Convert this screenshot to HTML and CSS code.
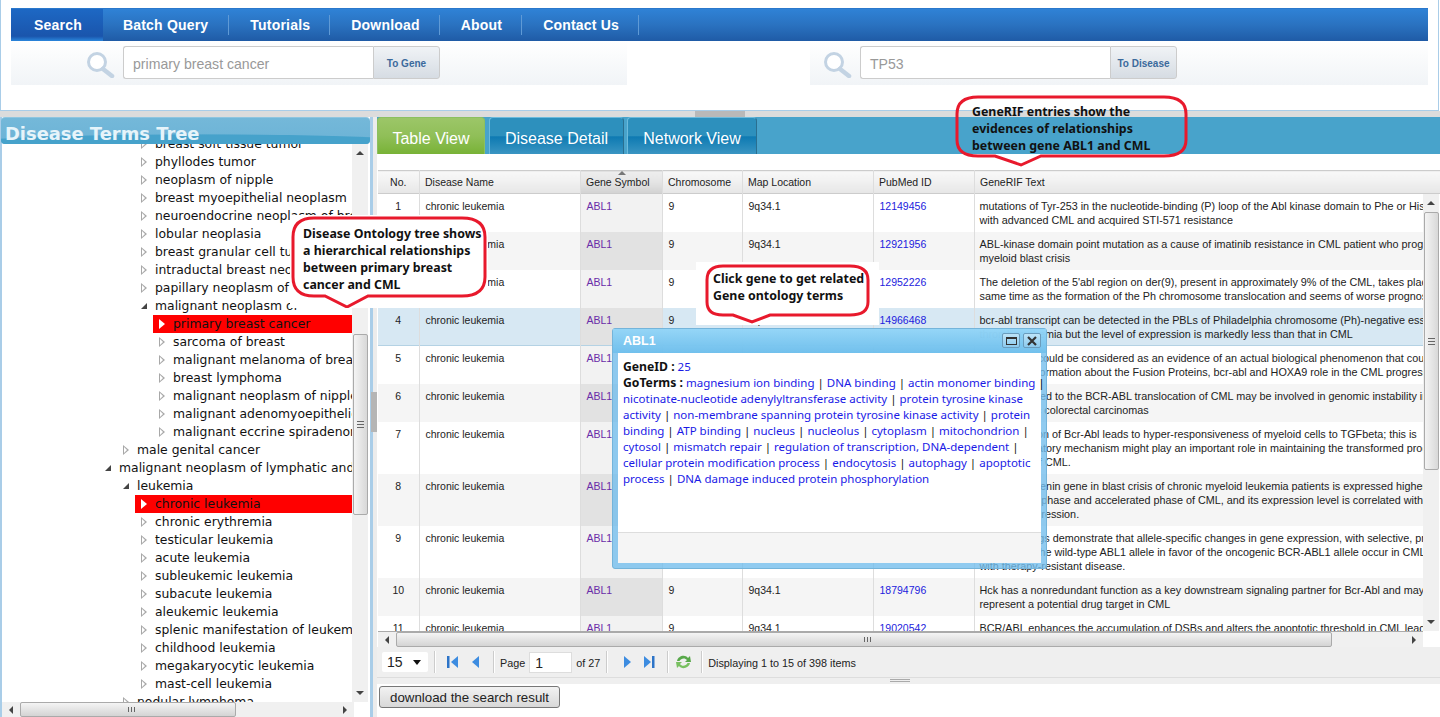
FILE: index.html
```html
<!DOCTYPE html>
<html>
<head>
  <title>Disease Terms</title>
  <link rel="stylesheet" href="styles.css">
</head>
<body>
  <div class="top">
    <ul class="nav">
      <li class="nav-item active">Search</li>
      <li class="nav-item">Batch Query</li>
      <li class="nav-item">Tutorials</li>
      <li class="nav-item">Download</li>
      <li class="nav-item">About</li>
      <li class="nav-item">Contact Us</li>
    </ul>
    <div class="search-row">
      <div class="search-block left-block">
        <svg class="lens" width="32" height="26" viewBox="0 0 32 26"><circle cx="12" cy="10" r="8.5" fill="#fff" stroke="#c3d3e3" stroke-width="3"/><path d="M18 17 L27 24" stroke="#c3d3e3" stroke-width="4.5" stroke-linecap="round"/></svg>
        <div class="search-input">primary breast cancer</div>
        <div class="search-btn">To Gene</div>
      </div>
      <div class="search-block right-block">
        <svg class="lens" width="32" height="26" viewBox="0 0 32 26"><circle cx="12" cy="10" r="8.5" fill="#fff" stroke="#c3d3e3" stroke-width="3"/><path d="M18 17 L27 24" stroke="#c3d3e3" stroke-width="4.5" stroke-linecap="round"/></svg>
        <div class="search-input">TP53</div>
        <div class="search-btn">To Disease</div>
      </div>
    </div>
  </div>

  <div class="split"><div class="split-handle"></div></div>

  <div class="main">
    <div class="tree-panel">
      <div class="tree-title">Disease Terms Tree</div>
      <div class="tree-wrap">
        <div class="tree-scroll">
          <div class="tree-list">
            <div class="tree-row l2"><i class="arrow"></i><span>breast soft tissue tumor</span></div>
            <div class="tree-row l2"><i class="arrow"></i><span>phyllodes tumor</span></div>
            <div class="tree-row l2"><i class="arrow"></i><span>neoplasm of nipple</span></div>
            <div class="tree-row l2"><i class="arrow"></i><span>breast myoepithelial neoplasm</span></div>
            <div class="tree-row l2"><i class="arrow"></i><span>neuroendocrine neoplasm of breast</span></div>
            <div class="tree-row l2"><i class="arrow"></i><span>lobular neoplasia</span></div>
            <div class="tree-row l2"><i class="arrow"></i><span>breast granular cell tumor</span></div>
            <div class="tree-row l2"><i class="arrow"></i><span>intraductal breast neoplasm</span></div>
            <div class="tree-row l2"><i class="arrow"></i><span>papillary neoplasm of breast</span></div>
            <div class="tree-row l2"><i class="arrow open"></i><span>malignant neoplasm of</span></div>
            <div class="tree-row l3 hit"><i class="arrow"></i><span>primary breast cancer</span></div>
            <div class="tree-row l3"><i class="arrow"></i><span>sarcoma of breast</span></div>
            <div class="tree-row l3"><i class="arrow"></i><span>malignant melanoma of breast</span></div>
            <div class="tree-row l3"><i class="arrow"></i><span>breast lymphoma</span></div>
            <div class="tree-row l3"><i class="arrow"></i><span>malignant neoplasm of nipple</span></div>
            <div class="tree-row l3"><i class="arrow"></i><span>malignant adenomyoepithelioma</span></div>
            <div class="tree-row l3"><i class="arrow"></i><span>malignant eccrine spiradenoma</span></div>
            <div class="tree-row l1"><i class="arrow"></i><span>male genital cancer</span></div>
            <div class="tree-row l0"><i class="arrow open"></i><span>malignant neoplasm of lymphatic and hematopoietic tissue</span></div>
            <div class="tree-row l1"><i class="arrow open"></i><span>leukemia</span></div>
            <div class="tree-row l2 hit"><i class="arrow"></i><span>chronic leukemia</span></div>
            <div class="tree-row l2"><i class="arrow"></i><span>chronic erythremia</span></div>
            <div class="tree-row l2"><i class="arrow"></i><span>testicular leukemia</span></div>
            <div class="tree-row l2"><i class="arrow"></i><span>acute leukemia</span></div>
            <div class="tree-row l2"><i class="arrow"></i><span>subleukemic leukemia</span></div>
            <div class="tree-row l2"><i class="arrow"></i><span>subacute leukemia</span></div>
            <div class="tree-row l2"><i class="arrow"></i><span>aleukemic leukemia</span></div>
            <div class="tree-row l2"><i class="arrow"></i><span>splenic manifestation of leukemia</span></div>
            <div class="tree-row l2"><i class="arrow"></i><span>childhood leukemia</span></div>
            <div class="tree-row l2"><i class="arrow"></i><span>megakaryocytic leukemia</span></div>
            <div class="tree-row l2"><i class="arrow"></i><span>mast-cell leukemia</span></div>
            <div class="tree-row l1"><i class="arrow"></i><span>nodular lymphoma</span></div>
          </div>
        </div>
        <div class="vbar tree-vbar">
          <i class="sb-up"></i>
          <div class="vtrack"><div class="vthumb"><i class="grip"></i></div></div>
          <i class="sb-down"></i>
        </div>
      </div>
      <div class="hbar tree-hbar">
        <i class="sb-left"></i>
        <div class="htrack"><div class="hthumb"></div></div>
        <i class="sb-right"></i>
      </div>
    </div>

    <div class="divider"><div class="divider-handle"></div></div>

    <div class="content">
      <div class="tabs">
        <div class="tab current">Table View</div>
        <div class="tab">Disease Detail</div>
        <div class="tab">Network View</div>
      </div>
      <div class="grid">
        <table class="grid-head">
          <colgroup><col class="c-no"><col class="c-name"><col class="c-gene"><col class="c-chr"><col class="c-map"><col class="c-pub"><col class="c-rif"></colgroup>
          <tr>
            <th class="center">No.</th>
            <th>Disease Name</th>
            <th class="sorted"><b class="sort-mark"></b>Gene Symbol</th>
            <th>Chromosome</th>
            <th>Map Location</th>
            <th>PubMed ID</th>
            <th>GeneRIF Text</th>
          </tr>
        </table>
        <div class="grid-mid">
          <div class="grid-rows">
            <table class="grid-body">
              <colgroup><col class="c-no"><col class="c-name"><col class="c-gene"><col class="c-chr"><col class="c-map"><col class="c-pub"><col class="c-rif"></colgroup>
              <tr><td class="center">1</td><td>chronic leukemia</td><td class="gene"><a>ABL1</a></td><td>9</td><td>9q34.1</td><td class="pub">12149456</td><td class="rif">mutations of Tyr-253 in the nucleotide-binding (P) loop of the Abl kinase domain to Phe or His<br>with advanced CML and acquired STI-571 resistance</td></tr>
              <tr><td class="center">2</td><td>chronic leukemia</td><td class="gene"><a>ABL1</a></td><td>9</td><td>9q34.1</td><td class="pub">12921956</td><td class="rif">ABL-kinase domain point mutation as a cause of imatinib resistance in CML patient who progressed to<br>myeloid blast crisis</td></tr>
              <tr><td class="center">3</td><td>chronic leukemia</td><td class="gene"><a>ABL1</a></td><td>9</td><td>9q34.1</td><td class="pub">12952226</td><td class="rif">The deletion of the 5'abl region on der(9), present in approximately 9% of the CML, takes place at the<br>same time as the formation of the Ph chromosome translocation and seems of worse prognosis</td></tr>
              <tr class="selected"><td class="center">4</td><td>chronic leukemia</td><td class="gene"><a>ABL1</a></td><td>9</td><td>9q34.1</td><td class="pub">14966468</td><td class="rif">bcr-abl transcript can be detected in the PBLs of Philadelphia chromosome (Ph)-negative essential<br>thrombocythemia but the level of expression is markedly less than that in CML</td></tr>
              <tr><td class="center">5</td><td>chronic leukemia</td><td class="gene"><a>ABL1</a></td><td>9</td><td>9q34.1</td><td class="pub">15107829</td><td class="rif">This finding could be considered as an evidence of an actual biological phenomenon that could<br>and more information about the Fusion Proteins, bcr-abl and HOXA9 role in the CML progression</td></tr>
              <tr><td class="center">6</td><td>chronic leukemia</td><td class="gene"><a>ABL1</a></td><td>9</td><td>9q34.1</td><td class="pub">15149347</td><td class="rif">Mutation linked to the BCR-ABL translocation of CML may be involved in genomic instability in<br>and sporadic colorectal carcinomas</td></tr>
              <tr><td class="center">7</td><td>chronic leukemia</td><td class="gene"><a>ABL1</a></td><td>9</td><td>9q34.1</td><td class="pub">15280218</td><td class="rif">Co-expression of Bcr-Abl leads to hyper-responsiveness of myeloid cells to TGFbeta; this is<br>its compensatory mechanism might play an important role in maintaining the transformed progenitors<br>phenotype of CML.</td></tr>
              <tr><td class="center">8</td><td>chronic leukemia</td><td class="gene"><a>ABL1</a></td><td>9</td><td>9q34.1</td><td class="pub">16007223</td><td class="rif">The beta-catenin gene in blast crisis of chronic myeloid leukemia patients is expressed higher<br>than chronic phase and accelerated phase of CML, and its expression level is correlated with the<br>disease progression.</td></tr>
              <tr><td class="center">9</td><td>chronic leukemia</td><td class="gene"><a>ABL1</a></td><td>9</td><td>9q34.1</td><td class="pub">17456803</td><td class="rif">These findings demonstrate that allele-specific changes in gene expression, with selective, preferential<br>silencing of the wild-type ABL1 allele in favor of the oncogenic BCR-ABL1 allele occur in CML<br>with therapy-resistant disease.</td></tr>
              <tr><td class="center">10</td><td>chronic leukemia</td><td class="gene"><a>ABL1</a></td><td>9</td><td>9q34.1</td><td class="pub">18794796</td><td class="rif">Hck has a nonredundant function as a key downstream signaling partner for Bcr-Abl and may<br>represent a potential drug target in CML</td></tr>
              <tr><td class="center">11</td><td>chronic leukemia</td><td class="gene"><a>ABL1</a></td><td>9</td><td>9q34.1</td><td class="pub">19020542</td><td class="rif">BCR/ABL enhances the accumulation of DSBs and alters the apoptotic threshold in CML leading to<br>genomic instability</td></tr>
            </table>
          </div>
          <div class="vbar grid-vbar">
            <i class="sb-up"></i>
            <div class="vtrack"><div class="vthumb"><i class="grip"></i></div></div>
            <i class="sb-down"></i>
          </div>
        </div>
        <div class="hbar grid-hbar">
          <i class="sb-left"></i>
          <div class="htrack"><div class="hthumb"></div></div>
          <i class="sb-right"></i>
        </div>
      </div>

      <div class="pager">
        <div class="page-size">15<i class="caret"></i></div>
        <i class="sep"></i>
        <svg class="pg-icon" width="12" height="14" viewBox="0 0 12 14"><rect x="0" y="1" width="2.5" height="12" fill="#2d74c8"/><path d="M11 1 V13 L4 7 Z" fill="#3d8ce0"/></svg>
        <svg class="pg-icon" width="8" height="14" viewBox="0 0 8 14"><path d="M8 1 V13 L1 7 Z" fill="#3d8ce0"/></svg>
        <i class="sep wide"></i>
        <span class="pg-text">Page</span>
        <div class="page-no">1</div>
        <span class="pg-text">of 27</span>
        <i class="sep"></i>
        <svg class="pg-icon next" width="8" height="14" viewBox="0 0 8 14"><path d="M0 1 V13 L7 7 Z" fill="#3d8ce0"/></svg>
        <svg class="pg-icon last" width="12" height="14" viewBox="0 0 12 14"><path d="M1 1 V13 L8 7 Z" fill="#3d8ce0"/><rect x="9" y="1" width="2.5" height="12" fill="#2d74c8"/></svg>
        <i class="sep"></i>
        <svg class="pg-icon refresh" width="17" height="16" viewBox="0 0 17 16"><path d="M2 7 C3 2 10 0 13 4 L15 2 L16 8 L10 8 L12 6 C10 3.500 6 4 4.500 7 Z" fill="#58a84a"/><path d="M15 9 C14 14 7 16 4 12 L2 14 L1 8 L7 8 L5 10 C7 13 11 12 12.500 9 Z" fill="#78c060"/></svg>
        <i class="sep"></i>
        <span class="pg-text">Displaying 1 to 15 of 398 items</span>
      </div>
      <div class="grid-foot"><i class="foot-handle"></i></div>
      <button class="download" type="button">download the search result</button>
    </div>
  </div>

  <!-- annotations drawn over the screenshot -->
  <div class="callout note-rif">
    <svg width="236" height="75" viewBox="0 0 236 75"><path d="M24 3 H210 Q232 3 232 20 V46 Q232 62 210 62 H87 L67 71 L41 62 H24 Q3 62 3 46 V20 Q3 3 24 3 Z" fill="none" stroke="#e8192c" stroke-width="3"/></svg>
    <p>GeneRIF entries show the<br>evidences of relationships<br>between gene ABL1 and CML</p>
  </div>
  <div class="callout note-tree">
    <svg width="198" height="93" viewBox="0 0 198 93"><path d="M24 3 H172 Q195 3 195 22 V62 Q195 81 172 81 H78 L57 92 L35 81 H24 Q3 81 3 62 V22 Q3 3 24 3 Z" fill="#fff" stroke="#e8192c" stroke-width="3"/></svg>
    <p>Disease Ontology tree shows<br>a hierarchical relationships<br>between primary breast<br>cancer and CML</p>
  </div>
  <div class="callout note-gene">
    <svg width="183" height="63" viewBox="0 0 183 63"><path d="M27 4 H154 Q172 4 172 18 V40 Q172 53 154 53 H74 L56 60 L37 53 H27 Q11 53 11 40 V18 Q11 4 27 4 Z" fill="#fff" stroke="#e8192c" stroke-width="3"/></svg>
    <p>Click gene to get related<br>Gene ontology terms</p>
  </div>

  <div class="window">
    <div class="win-head">
      <span class="win-title">ABL1</span>
      <div class="win-tools">
        <span class="win-tool"><i class="win-max"></i></span>
        <span class="win-tool"><svg width="10" height="10" viewBox="0 0 10 10"><path d="M1 1 L9 9 M9 1 L1 9" stroke="#333" stroke-width="2.200"/></svg></span>
      </div>
    </div>
    <div class="win-body">
      <b>GeneID :</b> <a>25</a><br>
      <b>GoTerms :</b> <a>magnesium ion binding</a> | <a>DNA binding</a> | <a>actin monomer binding</a> |<br>
      <a>nicotinate-nucleotide adenylyltransferase activity</a> | <a>protein tyrosine kinase</a><br>
      <a>activity</a> | <a>non-membrane spanning protein tyrosine kinase activity</a> | <a>protein</a><br>
      <a>binding</a> | <a>ATP binding</a> | <a>nucleus</a> | <a>nucleolus</a> | <a>cytoplasm</a> | <a>mitochondrion</a> |<br>
      <a>cytosol</a> | <a>mismatch repair</a> | <a>regulation of transcription, DNA-dependent</a> |<br>
      <a>cellular protein modification process</a> | <a>endocytosis</a> | <a>autophagy</a> | <a>apoptotic</a><br>
      <a>process</a> | <a>DNA damage induced protein phosphorylation</a>
    </div>
    <div class="win-foot"></div>
  </div>
</body>
</html>
```
FILE: styles.css
```css
* {
  box-sizing: border-box;
}

body {
  margin: 0;
  width: 1440px;
  height: 717px;
  overflow: hidden;
  position: relative;
  background: white;
  font-family: "Liberation Sans", Arial, sans-serif;
}

/* top area */
.top {
  height: 111px;
  width: 1439px;
  padding: 8px 10px 0;
  border: 1px solid #a9cde8;
  border-top: none;
}

.nav {
  display: flex;
  list-style: none;
  margin: 0;
  padding: 0;
  height: 33px;
  background: linear-gradient(#2f82d6, #2a72c0 50%, #1f5ba6);
  border-top: 1px solid #2a78cc;
}

.nav-item {
  padding: 0 20px 0 21px;
  line-height: 32px;
  font-size: 14px;
  font-weight: bold;
  color: white;
  letter-spacing: 0.2px;
  position: relative;
}

.nav-item::after {
  content: "";
  position: absolute;
  right: 0;
  top: 6px;
  bottom: 6px;
  width: 1px;
  background: #5f9ad6;
}

.nav-item.active {
  padding: 0 21px 0 23px;
  background: linear-gradient(#1d68c4, #1a55ac 85%, #2a86dc);
}

.nav-item.active + .nav-item {
  padding: 0 21px 0 20px;
}

.nav-item.active::after {
  display: none;
}

.search-row {
  display: flex;
  justify-content: space-between;
  height: 44px;
}

.search-block {
  display: flex;
  align-items: flex-start;
  padding-top: 5px;
  background: linear-gradient(white, #f1f4f7);
}

.left-block {
  width: 616px;
  padding-left: 74px;
}

.right-block {
  width: 618px;
  padding-left: 12px;
}

.lens {
  margin: 6px 6px 0 0;
}

.search-input {
  width: 250px;
  height: 33px;
  padding-left: 9px;
  line-height: 35px;
  font-size: 14.100px;
  color: #999;
  background: white;
  border: 1px solid #ccc;
  border-right: none;
  border-radius: 3px 0 0 3px;
}

.search-btn {
  width: 67px;
  height: 33px;
  text-align: center;
  line-height: 33px;
  font-size: 10px;
  font-weight: bold;
  color: #3b6a9c;
  background: linear-gradient(#f0f3f6, #d6dce3);
  border: 1px solid #ccc;
  border-radius: 0 3px 3px 0;
}

.split {
  height: 6px;
  background: #dcdcdc;
  display: flex;
  justify-content: center;
}

.split-handle {
  width: 50px;
  background: #b9b9b9;
}

.main {
  display: flex;
  height: 600px;
}

/* left tree */
.tree-panel {
  width: 370px;
  padding-left: 2px;
  display: flex;
  flex-direction: column;
  background: linear-gradient(90deg, #a9cde8 2px, white 2px);
}

.tree-title {
  height: 27px;
  margin-left: -1px;
  padding: 6px 0 0 4px;
  font-family: "DejaVu Sans", sans-serif;
  font-size: 17.900px;
  line-height: 20px;
  font-weight: bold;
  color: #e6f4fa;
  border-radius: 4px;
  border-top: 1px solid #8fc6e0;
  background:
    radial-gradient(ellipse 250px 10px at 200px 100%, #46a2cb 92%, transparent 100%),
    linear-gradient(#74b8d9, #6cb3d6);
}

.tree-wrap {
  flex: 1;
  display: flex;
  min-height: 0;
}

.tree-scroll {
  width: 350px;
  overflow: hidden;
}

.tree-list {
  margin-top: -9px;
  font-family: "DejaVu Sans", sans-serif;
  font-size: 12.400px;
  color: #111;
}

.tree-row {
  display: flex;
  align-items: center;
  height: 18px;
  line-height: 18px;
  white-space: nowrap;
}

.l0 { margin-left: 97px; }
.l1 { margin-left: 115px; }
.l2 { margin-left: 133px; }
.l3 { margin-left: 151px; }

.hit {
  background: red;
}

.arrow {
  flex: none;
  width: 20px;
  height: 18px;
  position: relative;
}

.arrow::before {
  content: "";
  position: absolute;
  left: 6px;
  top: 4px;
  border-left: 6px solid #a8a8a8;
  border-top: 5px solid transparent;
  border-bottom: 5px solid transparent;
}

.arrow::after {
  content: "";
  position: absolute;
  left: 7px;
  top: 6px;
  border-left: 3.500px solid white;
  border-top: 3px solid transparent;
  border-bottom: 3px solid transparent;
}

.hit .arrow::before {
  border-left-color: white;
}

.arrow.open::before {
  left: 6px;
  top: 6px;
  border: none;
  border-bottom: 6px solid #444;
  border-left: 6px solid transparent;
}

.arrow.open::after {
  display: none;
}

/* scrollbars */
.vbar {
  width: 16px;
  display: flex;
  flex-direction: column;
  background: #f0f0f0;
}

.vtrack {
  flex: 1;
  min-height: 0;
}

.vthumb {
  display: flex;
  align-items: center;
  justify-content: center;
  width: 15px;
  margin-left: 1px;
  background: linear-gradient(90deg, #f4f4f4, #d8d8d8);
  border: 1px solid #aaa;
  border-radius: 2px;
}

.grip {
  width: 7px;
  height: 7px;
  background: repeating-linear-gradient(#666 0 1px, transparent 1px 3px);
}

.hbar {
  display: flex;
  align-items: center;
  height: 15px;
  background: #f0f0f0;
}

.htrack {
  flex: 1;
  height: 100%;
}

.hthumb {
  height: 15px;
  background: linear-gradient(#f4f4f4, #d4d4d4);
  border: 1px solid #aaa;
  border-radius: 2px;
  position: relative;
}

.hthumb::after {
  content: "";
  position: absolute;
  left: 50%;
  top: 4px;
  width: 7px;
  height: 5px;
  background: repeating-linear-gradient(90deg, #666 0 1px, transparent 1px 3px);
}

.sb-up,
.sb-down,
.sb-left,
.sb-right {
  flex: none;
  display: flex;
  align-items: center;
  justify-content: center;
}

.sb-up, .sb-down { height: 18px; }
.sb-left, .sb-right { width: 18px; height: 15px; }

.sb-up::before {
  content: "";
  border-bottom: 4px solid #444;
  border-left: 4px solid transparent;
  border-right: 4px solid transparent;
}

.sb-down::before {
  content: "";
  border-top: 4px solid #444;
  border-left: 4px solid transparent;
  border-right: 4px solid transparent;
}

.sb-left::before {
  content: "";
  border-right: 4px solid #444;
  border-top: 4px solid transparent;
  border-bottom: 4px solid transparent;
}

.sb-right::before {
  content: "";
  border-left: 4px solid #444;
  border-top: 4px solid transparent;
  border-bottom: 4px solid transparent;
}

.tree-vbar .vthumb {
  height: 181px;
  margin-top: 172px;
}

.tree-hbar {
  margin-right: 16px;
}

.tree-hbar .hthumb {
  width: 216px;
}

.divider {
  width: 7px;
  background: linear-gradient(90deg, #a9cde8 3px, #ececec 3px);
  position: relative;
}

.divider-handle {
  position: absolute;
  left: 1px;
  top: 275px;
  width: 6px;
  height: 40px;
  background: #b5b5b5;
}

/* right side */
.content {
  flex: 1;
  min-width: 0;
  display: flex;
  flex-direction: column;
  align-items: flex-start;
}

.tabs {
  display: flex;
  align-self: stretch;
  height: 37px;
  gap: 3px;
  background: #48a3cb;
}

.tab {
  width: 135px;
  height: 37px;
  text-align: center;
  line-height: 42px;
  font-size: 16px;
  color: white;
  border: 1px solid #6dbbdc;
  border-right-color: #2a6f90;
  border-bottom: none;
  border-radius: 4px 4px 0 0;
  background: linear-gradient(#2d90bd, #2d90bd 50%, #0e7ab2 52%, #3a95c2);
}

.tab.current {
  width: 108px;
  margin-right: 1px;
  border-color: #8cc060;
  background: linear-gradient(#9cc668, #90bf58 50%, #78b236);
}

.tab:last-child {
  width: 130px;
}

.grid {
  align-self: stretch;
  margin-top: 16px;
  padding-left: 1px;
}

table {
  border-collapse: collapse;
  table-layout: fixed;
  width: 1045px;
  font-size: 10.500px;
}

.c-no { width: 41px; }
.c-name { width: 161px; }
.c-gene { width: 82px; }
.c-chr { width: 80px; }
.c-map { width: 131px; }
.c-pub { width: 101px; }
.c-rif { width: 449px; }

.grid-head {
  width: 1063px;
  height: 24px;
  border-top: 1px solid #ccc;
  border-bottom: 1px solid #ccc;
}

.grid-head .c-rif {
  width: 467px;
}

.grid-head th {
  padding: 0 0 0 5.500px;
  font-weight: normal;
  text-align: left;
  color: #222;
  white-space: nowrap;
  border-right: 1px solid #ddd;
  background: linear-gradient(#f8f8f8, #f2f2f2 40%, #e6e6e6);
}

.grid-head th.center,
.grid-body td.center {
  text-align: center;
  padding-left: 0;
}

.grid-head th.sorted {
  position: relative;
  background: linear-gradient(#eeeeee, #e4e4e4 50%, #d2d2d2);
}

.sort-mark {
  position: absolute;
  left: 37px;
  top: 0;
  border-bottom: 4px solid #777;
  border-left: 4px solid transparent;
  border-right: 4px solid transparent;
}

.grid-mid {
  display: flex;
  height: 437px;
}

.grid-rows {
  width: 1045px;
  overflow: hidden;
}

.grid-body td {
  padding: 5px 0 5px 6px;
  line-height: 14px;
  color: #222;
  vertical-align: top;
  white-space: nowrap;
  overflow: hidden;
  border-right: 1px solid #ddd;
}

.grid-body td.rif {
  padding-left: 5px;
  font-size: 10.800px;
}

.grid-body tr:nth-child(even) td {
  background: #f5f5f5;
}

.grid-body td.gene {
  background: #f2f2f2;
}

.grid-body tr:nth-child(even) td.gene {
  background: #e2e2e2;
}

.grid-body .gene a {
  color: #6a2ca8;
}

.grid-body .pub {
  color: #2222dd;
}

.grid-body tr.selected td {
  background: #d7e8f3;
  box-shadow: inset 0 -1px 0 #b4d2e4;
}

.grid-vbar .vthumb {
  height: 258px;
}

.grid-hbar {
  height: 16px;
  width: 1045px;
  border-top: 1px solid #aaa;
}

.grid-hbar .htrack {
  height: 15px;
}

.grid-hbar .hthumb {
  width: 936px;
}

.pager {
  align-self: stretch;
  display: flex;
  align-items: center;
  height: 30px;
  padding-left: 5px;
  font-size: 10.500px;
  color: #222;
  background: #efefef;
}

.page-size {
  width: 46px;
  height: 20px;
  padding-left: 5px;
  line-height: 20px;
  font-size: 14px;
  background: white;
  border-radius: 2px;
  position: relative;
}

.caret {
  position: absolute;
  right: 7px;
  top: 8px;
  border-top: 5px solid #111;
  border-left: 4px solid transparent;
  border-right: 4px solid transparent;
}

.sep {
  width: 1px;
  height: 22px;
  margin: 0 6px;
  background: #ccc;
  box-shadow: 1px 0 0 white;
}

.sep.wide {
  margin-left: 8px;
}

.pg-icon {
  margin: 0 6px;
}

.pg-icon.next {
  margin-left: 11px;
}

.pg-icon.last {
  margin-left: 5px;
}

.pg-icon.refresh {
  margin: 0 3px 0 1px;
}

.pg-text {
  margin-top: 2px;
  white-space: nowrap;
  font-size: 10.800px;
}

.page-no {
  width: 43px;
  height: 21px;
  margin: 0 4px;
  padding-left: 5px;
  line-height: 21px;
  font-size: 14px;
  background: white;
  border: 1px solid #ddd;
}

.grid-foot {
  align-self: stretch;
  height: 7px;
  background: #efefef;
  border-top: 1px solid #ddd;
  text-align: center;
  padding-right: 18px;
}

.foot-handle {
  display: block;
  width: 20px;
  height: 3px;
  margin: 1px auto 0;
  border-top: 1px solid #aaa;
  border-bottom: 1px solid #aaa;
}

.download {
  width: 181px;
  height: 22px;
  margin: 2px 0 0 2px;
  padding: 0;
  font-family: "Liberation Sans", Arial, sans-serif;
  font-size: 13.300px;
  color: #222;
  background: linear-gradient(#f2f2f2, #d8d8d8);
  border: 1px solid #777;
  border-radius: 3px;
}

/* red notes */
.callout {
  position: absolute;
}

.callout svg {
  position: absolute;
  left: 0;
  top: 0;
}

.callout p {
  position: relative;
  margin: 0;
  font-family: "Noto Sans", sans-serif;
  font-size: 12.400px;
  font-weight: bold;
  line-height: 17px;
  color: #111;
  white-space: nowrap;
}

.note-rif {
  left: 954px;
  top: 94px;
  width: 236px;
  height: 75px;
  padding: 9px 0 0 18px;
}

.note-tree {
  left: 290px;
  top: 215px;
  width: 198px;
  height: 93px;
  padding: 10px 0 0 13px;
  background: white;
}

.note-gene {
  left: 696px;
  top: 262px;
  width: 183px;
  height: 63px;
  padding: 8px 0 0 17px;
  background: white;
}

/* popup window */
.window {
  position: absolute;
  left: 612px;
  top: 328px;
  width: 435px;
  height: 241px;
  padding: 0 5px 5px;
  display: flex;
  flex-direction: column;
  border: 1px solid #74b4da;
  border-radius: 3px;
  background: rgba(116, 190, 236, 0.8);
}

.win-head {
  display: flex;
  justify-content: space-between;
  align-items: flex-start;
  height: 24px;
  margin: 0 -5px;
  padding: 4px 5px 0 10px;
  background: linear-gradient(rgba(150, 215, 248, 0.9), rgba(108, 190, 236, 0.85));
}

.win-title {
  font-size: 12.500px;
  font-weight: bold;
  line-height: 17px;
  color: white;
}

.win-tools {
  display: flex;
  gap: 3px;
}

.win-tool {
  display: flex;
  align-items: center;
  justify-content: center;
  width: 18px;
  height: 15px;
  border: 1px solid #6a9cbc;
  border-radius: 2px;
  background: linear-gradient(#bde4f8, #8ccaee);
}

.win-max {
  width: 11px;
  height: 8px;
  border: 1px solid #333;
  border-top-width: 2px;
}

.win-body {
  height: 180px;
  padding: 6px 5px 0;
  font-family: "Noto Sans", sans-serif;
  font-size: 11.500px;
  line-height: 16px;
  color: #111;
  white-space: nowrap;
  background: white;
  border-bottom: 1px solid #ddd;
}

.win-body b {
  font-size: 12.200px;
  line-height: 1;
}

.win-body a {
  color: #1a1ae6;
}

.win-foot {
  height: 30px;
  background: #f5f5f5;
}
```
